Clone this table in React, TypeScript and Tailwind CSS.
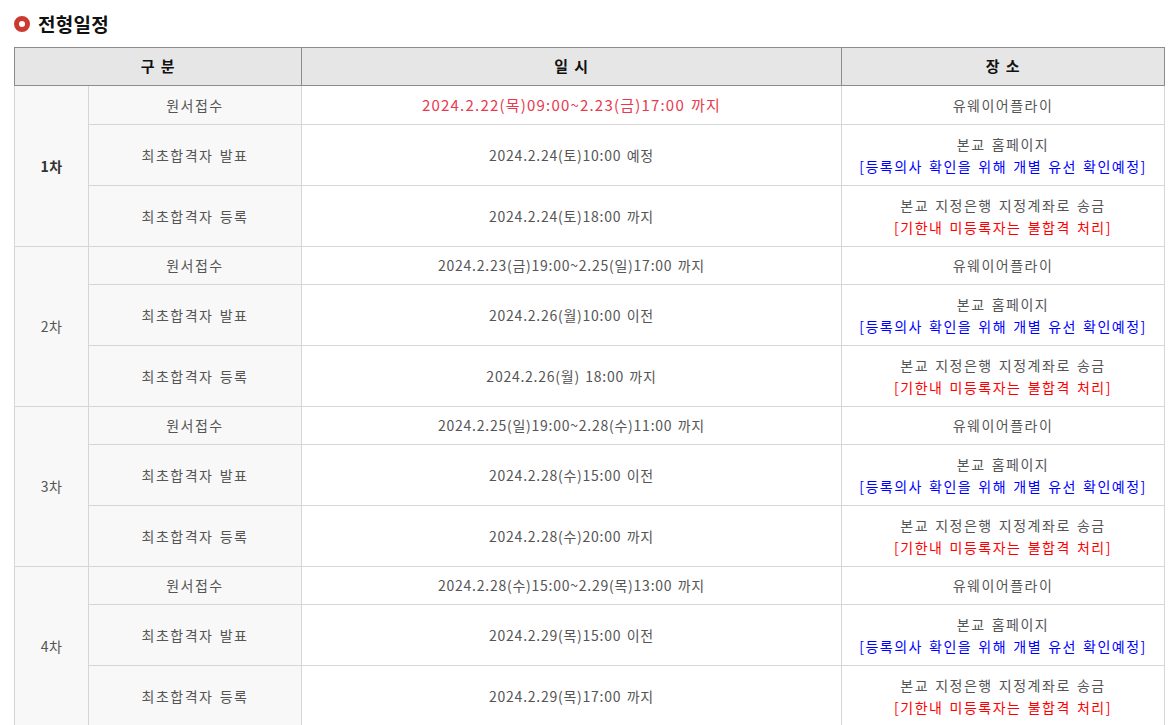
type Row = {
  label: string;
  date: string;
  place: string;
  note?: { text: string; tone: "blue" | "red" };
  highlight?: boolean;
};

type Group = { round: string; current?: boolean; rows: Row[] };

const groups: Group[] = [
  {
    round: "1차",
    current: true,
    rows: [
      { label: "원서접수", date: "2024.2.22(목)09:00~2.23(금)17:00 까지", place: "유웨이어플라이", highlight: true },
      { label: "최초합격자 발표", date: "2024.2.24(토)10:00 예정", place: "본교 홈페이지", note: { text: "[등록의사 확인을 위해 개별 유선 확인예정]", tone: "blue" } },
      { label: "최초합격자 등록", date: "2024.2.24(토)18:00 까지", place: "본교 지정은행 지정계좌로 송금", note: { text: "[기한내 미등록자는 불합격 처리]", tone: "red" } },
    ],
  },
  {
    round: "2차",
    rows: [
      { label: "원서접수", date: "2024.2.23(금)19:00~2.25(일)17:00 까지", place: "유웨이어플라이" },
      { label: "최초합격자 발표", date: "2024.2.26(월)10:00 이전", place: "본교 홈페이지", note: { text: "[등록의사 확인을 위해 개별 유선 확인예정]", tone: "blue" } },
      { label: "최초합격자 등록", date: "2024.2.26(월) 18:00 까지", place: "본교 지정은행 지정계좌로 송금", note: { text: "[기한내 미등록자는 불합격 처리]", tone: "red" } },
    ],
  },
  {
    round: "3차",
    rows: [
      { label: "원서접수", date: "2024.2.25(일)19:00~2.28(수)11:00 까지", place: "유웨이어플라이" },
      { label: "최초합격자 발표", date: "2024.2.28(수)15:00 이전", place: "본교 홈페이지", note: { text: "[등록의사 확인을 위해 개별 유선 확인예정]", tone: "blue" } },
      { label: "최초합격자 등록", date: "2024.2.28(수)20:00 까지", place: "본교 지정은행 지정계좌로 송금", note: { text: "[기한내 미등록자는 불합격 처리]", tone: "red" } },
    ],
  },
  {
    round: "4차",
    rows: [
      { label: "원서접수", date: "2024.2.28(수)15:00~2.29(목)13:00 까지", place: "유웨이어플라이" },
      { label: "최초합격자 발표", date: "2024.2.29(목)15:00 이전", place: "본교 홈페이지", note: { text: "[등록의사 확인을 위해 개별 유선 확인예정]", tone: "blue" } },
      { label: "최초합격자 등록", date: "2024.2.29(목)17:00 까지", place: "본교 지정은행 지정계좌로 송금", note: { text: "[기한내 미등록자는 불합격 처리]", tone: "red" } },
    ],
  },
];

const cell = "border border-[#d6d6d6] py-[8px] text-center align-middle";
const head = "h-[37.5px] border border-[#8c8c8c] bg-[#e6e6e6] text-[15px] font-bold tracking-[0.6px] text-[#111]";

export default function App() {
  return (
    <div
      className="min-h-screen bg-white px-[14px] pt-[13px] text-[14px] leading-[22px] text-[#555] tracking-[1.5px] [word-spacing:1.5px]"
      style={{ fontFamily: '"Noto Sans CJK KR", "Noto Sans", sans-serif' }}
    >
      {/* Title */}
      <div className="mb-[12px] flex items-center gap-[8px]">
        <span className="inline-block h-[16px] w-[16px] rounded-full border-[5px] border-[#cc3a2f] bg-white" />
        <h2 className="text-[19px] font-bold leading-[22px] tracking-[0.3px] text-[#111]">전형일정</h2>
      </div>

      {/* Schedule table */}
      <table className="w-[1150px] table-fixed border-collapse">
        <colgroup>
          <col className="w-[74px]" />
          <col className="w-[213px]" />
          <col className="w-[540px]" />
          <col className="w-[323px]" />
        </colgroup>
        <thead>
          <tr>
            <th colSpan={2} className={head}>구 분</th>
            <th className={head}>일 시</th>
            <th className={head}>장 소</th>
          </tr>
        </thead>
        <tbody>
          {groups.map((group) =>
            group.rows.map((row, i) => {
              // single-line rows sit 1px tighter than two-line rows
              const lh = row.note || row.highlight ? "leading-[22px]" : "leading-[21px]";
              return (
                <tr key={group.round + i}>
                  {i === 0 && (
                    <td
                      rowSpan={group.rows.length}
                      className={`${cell} bg-[#f8f8f8] tracking-[0.5px] ${group.current ? "font-bold text-[#333]" : ""}`}
                    >
                      {group.round}
                    </td>
                  )}
                  <td className={`${cell} ${lh} bg-[#f8f8f8]`}>{row.label}</td>
                  <td
                    className={`${cell} ${lh} ${
                      row.highlight ? "text-[15px] tracking-[1.2px] text-[#e73a4f]" : "tracking-[0.75px]"
                    }`}
                  >
                    {row.date}
                  </td>
                  <td className={`${cell} ${lh}`}>
                    <div>{row.place}</div>
                    {row.note && (
                      <div className={row.note.tone === "blue" ? "text-[#0000ff]" : "text-[#ff0000]"}>
                        {row.note.text}
                      </div>
                    )}
                  </td>
                </tr>
              );
            })
          )}
        </tbody>
      </table>
    </div>
  );
}
